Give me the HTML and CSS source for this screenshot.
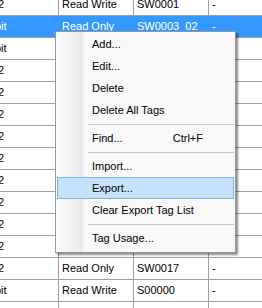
FILE: index.html
```html
<!DOCTYPE html>
<html>
<head>
<meta charset="utf-8">
<link rel="stylesheet" href="styles.css">
</head>
<body>
<div class="grid">
  <div class="row"><div class="c c0"><span class="k2">2</span></div><div class="c">Read Write</div><div class="c">SW0001</div><div class="c">-</div></div>
  <div class="row sel"><div class="c c0"><span class="kb">bit</span></div><div class="c">Read Only</div><div class="c">SW0003_02</div><div class="c">-</div></div>
  <div class="row"><div class="c c0"><span class="kb">bit</span></div><div class="c"></div><div class="c"></div><div class="c"></div></div>
  <div class="row"><div class="c c0"><span class="k2">2</span></div><div class="c"></div><div class="c"></div><div class="c"></div></div>
  <div class="row"><div class="c c0"><span class="k2">2</span></div><div class="c"></div><div class="c"></div><div class="c"></div></div>
  <div class="row"><div class="c c0"><span class="k2">2</span></div><div class="c"></div><div class="c"></div><div class="c"></div></div>
  <div class="row"><div class="c c0"><span class="k2">2</span></div><div class="c"></div><div class="c"></div><div class="c"></div></div>
  <div class="row"><div class="c c0"><span class="k2">2</span></div><div class="c"></div><div class="c"></div><div class="c"></div></div>
  <div class="row"><div class="c c0"><span class="k2">2</span></div><div class="c"></div><div class="c"></div><div class="c"></div></div>
  <div class="row"><div class="c c0"><span class="k2">2</span></div><div class="c"></div><div class="c"></div><div class="c"></div></div>
  <div class="row"><div class="c c0"><span class="k2">2</span></div><div class="c"></div><div class="c"></div><div class="c"></div></div>
  <div class="row"><div class="c c0"><span class="k2">2</span></div><div class="c"></div><div class="c"></div><div class="c"></div></div>
  <div class="row"><div class="c c0"><span class="k2">2</span></div><div class="c">Read Only</div><div class="c">SW0017</div><div class="c">-</div></div>
  <div class="row"><div class="c c0"><span class="kb">bit</span></div><div class="c">Read Write</div><div class="c">S00000</div><div class="c">-</div></div>
  <div class="row"><div class="c c0"></div><div class="c"></div><div class="c"></div><div class="c"></div></div>
</div>

<div class="menu">
  <div class="item"><span>Add...</span></div>
  <div class="item"><span>Edit...</span></div>
  <div class="item"><span>Delete</span></div>
  <div class="item"><span>Delete All Tags</span></div>
  <div class="sep"></div>
  <div class="item"><span>Find...</span><span class="key">Ctrl+F</span></div>
  <div class="sep"></div>
  <div class="item"><span>Import...</span></div>
  <div class="item hot"><span>Export...</span></div>
  <div class="item"><span>Clear Export Tag List</span></div>
  <div class="sep"></div>
  <div class="item"><span>Tag Usage...</span></div>
</div>
</body>
</html>
```
FILE: styles.css
```css
html, body {
  margin: 0;
  padding: 0;
  width: 262px;
  height: 308px;
  overflow: hidden;
  background: #ffffff;
  font-family: "Liberation Sans", Arial, sans-serif;
  font-size: 11px;
  color: #000;
}

.grid {
  margin-top: -6px;
  width: 262px;
  height: 314px;
  overflow: hidden;
}

.row {
  display: grid;
  grid-template-columns: 59px 75px 75px 1fr;
  height: 22px;
  box-sizing: border-box;
  border-bottom: 1px solid #a0a0a0;
}

.c {
  border-right: 1px solid #a0a0a0;
  line-height: 21px;
  padding-left: 3px;
  white-space: nowrap;
  overflow: hidden;
}

.c:last-child {
  border-right: none;
}

.c0 {
  padding-left: 0;
}

.k2 {
  margin-left: -2px;
}

.kb {
  margin-left: -5px;
}

.sel {
  background: #3399ff;
  color: #ffffff;
}

.sel .c {
  border-right-color: #3399ff;
}

.menu {
  position: absolute;
  left: 55px;
  top: 31px;
  width: 181px;
  box-sizing: border-box;
  border: 1px solid #979797;
  padding: 1px 0 3px;
  background: linear-gradient(to right, #fdfdfd 0, #f3f3f3 12px, #e9e9e9 26px, #f8f8f8 28px, #f8f8f8 100%);
  box-shadow: 2px 2px 2px rgba(0, 0, 0, 0.45);
}

.item {
  height: 22px;
  box-sizing: border-box;
  margin: 0 1px;
  padding: 0 30px 0 34px;
  display: flex;
  align-items: center;
  justify-content: space-between;
  border: 1px solid transparent;
  white-space: nowrap;
}

.hot {
  background: #c6e1fb;
  border-color: #7ab3ea;
}

.sep {
  height: 6px;
  display: flex;
  align-items: center;
  padding-left: 32px;
  padding-right: 1px;
}

.sep::before {
  content: "";
  flex: 1;
  height: 1px;
  background: #c2c2c2;
}
```
